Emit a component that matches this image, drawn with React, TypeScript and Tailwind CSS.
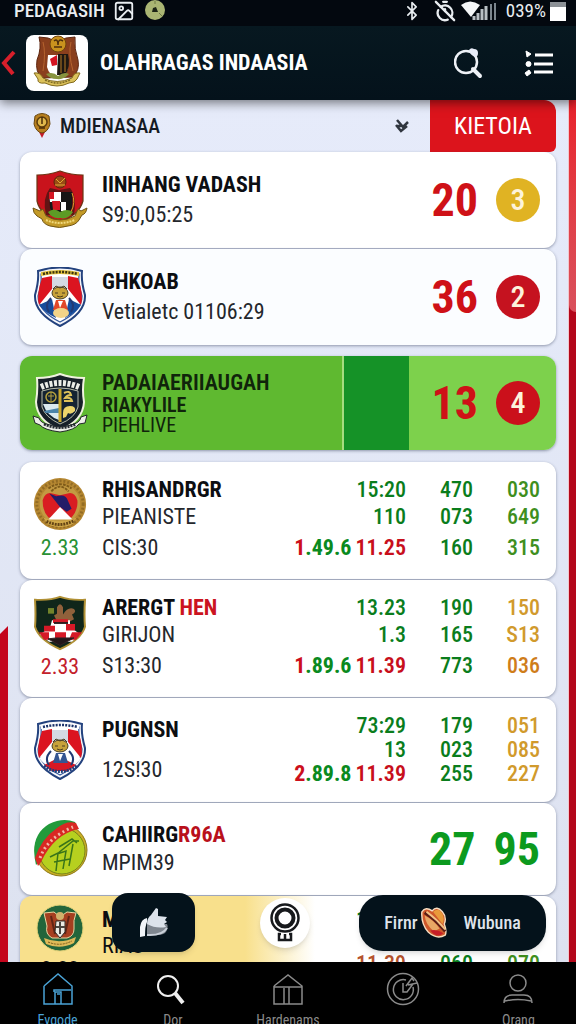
import type { ReactNode } from "react";
import { BluetoothIcon, Image as ImageIcon, TimerOff } from "lucide-react";

type Cell = { text: string; tone: string };

const green = "text-[#0a7d1c]";
const olive = "text-[#3f8f1e]";
const gold = "text-[#d19a2c]";
const amber = "text-[#cf7d1a]";

const rhisandrgr: Cell[][] = [
    [{ text: "15:20", tone: green }, { text: "470", tone: green }, { text: "030", tone: olive }],
    [{ text: "110", tone: green }, { text: "073", tone: green }, { text: "649", tone: olive }],
    [{ text: "1.49.6 11.25", tone: "split" }, { text: "160", tone: green }, { text: "315", tone: olive }],
];

const areract: Cell[][] = [
    [{ text: "13.23", tone: green }, { text: "190", tone: green }, { text: "150", tone: gold }],
    [{ text: "1.3", tone: green }, { text: "165", tone: green }, { text: "S13", tone: gold }],
    [{ text: "1.89.6 11.39", tone: "split" }, { text: "773", tone: green }, { text: "036", tone: amber }],
];

const pugnsn: Cell[][] = [
    [{ text: "73:29", tone: green }, { text: "179", tone: green }, { text: "051", tone: gold }],
    [{ text: "13", tone: green }, { text: "023", tone: green }, { text: "085", tone: gold }],
    [{ text: "2.89.8 11.39", tone: "split" }, { text: "255", tone: green }, { text: "227", tone: gold }],
];

function SplitTime({ text }: { text: string }) {
    const [left, right] = text.split(" ");
    return (
        <span className="font-bold">
            <span className="text-[#cc0f1c]">{left.slice(0, 1)}</span>
            <span className="text-[#0a8a1e]">{left.slice(1)}</span>
            <span className="ml-1 font-semibold text-[#c80f1c]">{right}</span>
        </span>
    );
}

function StatTable({ rows, dense, label }: { rows: Cell[][]; dense?: boolean; label: string }) {
    const heights = dense ? ["h-6", "h-6", "h-6"] : ["h-[26px]", "h-7", "h-[34px]"];
    return (
        <table aria-label={label} className="ml-auto text-right text-[22px] leading-6 font-medium">
            <tbody>
                {rows.map((row, i) => (
                    <tr key={i} className={heights[i]}>
                        {row.map((cell, j) => (
                            <td key={j} className={`p-0 whitespace-nowrap ${j > 0 ? "w-[67px]" : ""} ${cell.tone}`}>
                                {cell.tone === "split" ? <SplitTime text={cell.text} /> : cell.text}
                            </td>
                        ))}
                    </tr>
                ))}
            </tbody>
        </table>
    );
}

function Card({ children, className }: { children: ReactNode; className: string }) {
    return (
        <li className={`flex rounded-xl pr-4 pl-3 shadow-[0_1px_3px_rgba(40,50,80,0.45)] ${className}`}>
            {children}
        </li>
    );
}

function Score({ value, rank, color }: { value: string; rank: string; color: string }) {
    return (
        <div className="ml-auto flex items-center gap-[18px]">
            <span className="text-[46px] leading-none font-bold text-[#cf1117]">{value}</span>
            <span className={`flex size-11 items-center justify-center rounded-full text-[30px] leading-none font-medium text-[#fdf3dc] ${color}`}>
                {rank}
            </span>
        </div>
    );
}

function GarudaArt() {
    return (
        <svg viewBox="0 0 62 56" className="h-full w-full" aria-hidden="true">
            <path d="M13 2 L22 3 Q31 8 40 3 L49 2 Q48 14 52 25 Q54 35 47 42 L16 43 Q9 37 11 25 Q16 13 13 2Z" fill="#8a3f1d" stroke="#5c250f" />
            <path d="M17 7Q20 18 17 36M45 7Q42 18 47 36" stroke="#b5642f" fill="none" />
            <circle cx="32" cy="9" r="8" fill="#c9921e" stroke="#6f430d" />
            <path d="M28 6q4-3 4 4q0-7 5-4M28 12h8" stroke="#4f2f0c" fill="none" strokeWidth="1.5" />
            <path d="M22 20H42V33Q40 41 31 43Q23 40 21 32Z" fill="#fff" />
            <path d="M32 19H42Q45 32 39 40H31Z" fill="#1d1712" />
            <path d="M24 24L31 20V30L26 31Z" fill="#d31321" />
            <path d="M35 20V38M39 20V37" stroke="#b57b24" />
            <path d="M20 39Q27 36 32 41Q38 36 43 39Q38 45 31 44Q24 44 20 39" fill="#87933e" />
            <path d="M8 38Q14 37 17 43Q31 50 46 43Q48 37 54 38L51 44Q49 48 43 48Q31 54 19 48Q11 49 12 44Z" fill="#dcc25b" stroke="#826a1d" />
            <path d="M19 45Q31 51 44 45" stroke="#7e6a25" strokeWidth="1.5" strokeDasharray="2 1" fill="none" />
        </svg>
    );
}

function RedCrest() {
    return (
        <svg viewBox="0 0 56 60" className="h-[60px] w-14" aria-hidden="true">
            <path d="M5 5Q17 5 28 1Q39 5 51 5V31Q47 45 28 52Q8 45 5 31Z" fill="#c9131c" stroke="#6a3513" strokeWidth="1.2" />
            <path d="M14 45Q10 28 18 18L27 20L38 18Q45 26 42 45Z" fill="#621414" />
            <circle cx="28" cy="12" r="6" fill="#9a4b14" stroke="#59290b" />
            <path d="M24 9l4 4 5-5M23 15h10" stroke="#ddac34" fill="none" />
            <path d="M17 22H40V38Q36 46 28 47Q20 44 18 38Z" fill="#161616" />
            <path d="M17 22H29V32H18Z" fill="#fff" />
            <path d="M17 22H22V29H17ZM20 31H28V40H21Z" fill="#d51522" />
            <path d="M29 32H34V41H29Z" fill="#fff" />
            <path d="M40 23Q44 32 39 42" stroke="#da9e29" fill="none" />
            <path d="M16 42Q22 37 28 42Q35 38 41 42Q36 50 28 48Q20 49 16 42Z" fill="#5c9b25" />
            <path d="M1 38L8 41L11 39L14 46Q28 54 43 46L46 39L49 41L55 38Q54 44 50 45L47 50Q44 55 36 56Q28 59 18 56Q11 54 10 49L5 46Q1 43 1 38Z" fill="#c39a27" stroke="#725616" />
            <path d="M14 50Q28 56 43 50" stroke="#f0d87b" strokeWidth="2" strokeDasharray="2 1" fill="none" />
        </svg>
    );
}

function StripedShield({ tall }: { tall?: boolean }) {
    return (
        <svg viewBox="0 0 56 60" className="h-[60px] w-14" aria-hidden="true">
            <path d="M6 4Q28-3 50 4Q49 14 53 28Q54 46 28 59Q2 46 3 28Q7 14 6 4Z" fill="#f6f7fb" stroke="#23427e" strokeWidth="2" />
            <path d="M9 7Q28 2 47 7Q46 17 50 29Q50 44 28 55Q6 44 6 29Q10 17 9 7Z" fill="#fff" stroke="#2f559a" strokeWidth="1.2" />
            <path d="M10 11L20 9V22L7 38Q4 28 10 11ZM46 11L36 9V22L49 38Q52 28 46 11Z" fill="#db1420" />
            <path d="M20 10H36V22H20Z" fill="#d4d9e3" />
            <path d="M9 5Q28 1 47 5V9Q28 5 9 9Z" fill={tall ? "#fff" : "#e2c33f"} />
            <path d="M11 7Q28 3 46 7" stroke={tall ? "#1a326b" : "#3a3311"} strokeWidth="2.5" strokeDasharray="2 1.2" fill="none" />
            <path d="M7 38L20 32L24 51Q13 46 7 38ZM49 38L37 32L33 51Q44 46 49 38Z" fill={tall ? "#fff" : "#164d9c"} />
            {tall && <path d="M12 45L28 37L44 45L36 51H20Z" fill="#d71824" />}
            <path d="M17 45Q12 38 19 31M39 45Q44 38 37 31" stroke="#223a74" strokeWidth="2" fill="none" />
            <ellipse cx="28" cy="26" rx="8" ry="6" fill="#c7a23a" stroke="#4b4024" />
            <path d="M21 22l3-3 4 2 4-2 3 3M23 26h3M30 26h3M25 29q3 2 6 0" stroke="#4a3d20" fill="none" />
            <path d="M24 33H33L36 43H21Z" fill={tall ? "#345692" : "#e14829"} />
            <path d="M26 34L28 41L31 34" fill="#fff" />
            {!tall && <ellipse cx="29" cy="46" rx="8" ry="5" fill="#f2d488" />}
            {tall && <path d="M12 46Q28 57 45 46" stroke="#203e7b" strokeWidth="3" strokeDasharray="2 1" fill="none" />}
        </svg>
    );
}

function BlackShield() {
    return (
        <svg viewBox="0 0 56 60" className="h-[60px] w-14" aria-hidden="true">
            <path d="M5 5Q18 5 28 1Q39 5 52 5Q50 17 52 29Q51 48 28 57Q5 48 4 29Q6 17 5 5Z" fill="#172028" stroke="#f0f2df" strokeWidth="2" />
            <path d="M9 14Q28 6 47 14" stroke="#eceee8" strokeWidth="6" strokeDasharray="3 1.5" fill="none" />
            <path d="M10 18Q28 12 46 18V34Q43 45 28 51Q13 44 10 34Z" fill="#142332" stroke="#b9bdac" />
            <path d="M11 31H27V47Q15 43 11 31Z" fill="#dbe9ef" />
            <path d="M12 38L27 35V40L14 40Z" fill="#4b84aa" />
            <circle cx="19" cy="24" r="5" fill="none" stroke="#b6a13f" strokeWidth="1.5" />
            <path d="M16 23h6M19 19v9" stroke="#b6a13f" />
            <path d="M28 16V49" stroke="#c9a72c" strokeWidth="3" />
            <path d="M32 20q6-3 7 2q-4 0-6 3q6-1 7 3h-8" fill="none" stroke="#dfc25a" strokeWidth="2" />
            <path d="M31 40Q31 33 38 33Q44 33 43 38Q39 42 36 40L34 44L31 45Z" fill="#edd56b" />
            <path d="M1 43L7 45Q8 50 18 52Q28 56 39 52Q48 50 49 44L55 42L53 50L47 51Q43 57 28 59Q12 57 8 52L3 50Z" fill="#eef0e9" stroke="#22282a" />
            <path d="M12 51Q28 58 44 51" stroke="#252b31" strokeWidth="3" strokeDasharray="2 1" fill="none" />
        </svg>
    );
}

function GoldMedal() {
    return (
        <svg viewBox="0 0 56 56" className="h-[54px] w-14" aria-hidden="true">
            <circle cx="28" cy="28" r="27" fill="#b58731" />
            <circle cx="28" cy="28" r="24" fill="none" stroke="#936c24" strokeWidth="3" strokeDasharray="2 2" />
            <circle cx="28" cy="28" r="21" fill="#c39a42" />
            <path d="M16 12Q28 3 40 12M19 15Q28 5 37 15" stroke="#7f5b19" strokeWidth="2" strokeDasharray="3 1" fill="none" />
            <path d="M10 24Q10 36 16 42H40Q47 34 46 24Q43 15 36 17L28 19L20 17Q13 15 10 24Z" fill="#d91d22" />
            <path d="M17 17L24 20Q34 17 36 24L40 33L35 36L28 31Z" fill="#241d68" />
            <path d="M28 31L41 44H16Z" fill="#fff" />
            <path d="M11 42Q28 50 45 42L41 49Q28 55 15 49Z" fill="#d1a949" />
            <path d="M14 46Q28 53 43 45" stroke="#634314" strokeWidth="3" strokeDasharray="2 1" fill="none" />
        </svg>
    );
}

function DarkShield() {
    return (
        <svg viewBox="0 0 56 60" preserveAspectRatio="none" className="h-14 w-14" aria-hidden="true">
            <path d="M3 5Q18 6 28 2Q39 6 53 5Q52 22 53 34Q49 48 28 58Q7 48 3 34Q4 22 3 5Z" fill="#10261a" stroke="#b09035" strokeWidth="2" />
            <path d="M25 20V13q3-6 6 0v8q5-9 11-6q3 3-2 6l2 5-7 4H26l-4-8Z" fill="#90613b" />
            <path d="M16 14h6v6h-6z" fill="#72832b" />
            <path d="M20 27H38V34L48 42L40 50H17L8 42L18 35Z" fill="#fff" />
            <path d="M21 26H36V30H21ZM12 33H23V39H12ZM34 31H43V38H34ZM23 40H34V46H23ZM7 40H17V48H12ZM40 40H50L44 48H37Z" fill="#d51927" />
            <path d="M24 46H42L28 54L16 47Z" stroke="#332126" fill="#221719" />
            <path d="M22 30h14" stroke="#281a1c" strokeWidth="2" />
        </svg>
    );
}

function GreenMedal() {
    return (
        <svg viewBox="0 0 56 60" className="h-[60px] w-14" aria-hidden="true">
            <circle cx="29" cy="31" r="26" fill="#c9ae24" stroke="#8c7818" />
            <circle cx="30" cy="32" r="23" fill="#b6d01f" stroke="#76831a" />
            <path d="M4 46Q-3 17 17 5Q31-2 43 3L45 8Q17 14 6 44Z" fill="#229a3b" />
            <path d="M6 47L3 39Q9 20 25 9Q35 1 44 4L47 10Q22 15 9 43Z" fill="#d92823" />
            <path d="M8 39Q15 19 41 8" stroke="#f1b7a5" strokeWidth="3" strokeDasharray="2 3" fill="none" />
            <path d="M24 52L26 34L18 38M31 50L34 32L25 35L41 22L47 22M27 28L40 20L45 24M37 47L41 25M22 43L38 40" stroke="#397519" strokeWidth="1.5" fill="none" />
        </svg>
    );
}

function RoundGarudaCrest() {
    return (
        <svg viewBox="0 0 48 48" className="mx-1 size-12" aria-hidden="true">
            <circle cx="24" cy="24" r="23" fill="#23653b" stroke="#e3d37a" />
            <path d="M8 9L18 8L24 13L31 8L40 9Q37 16 38 25Q38 32 31 34H16Q9 30 11 22Z" fill="#a63f20" stroke="#ead7a2" />
            <path d="M15 12L19 30M33 12L29 30" stroke="#612415" strokeWidth="2" />
            <circle cx="24" cy="12" r="4" fill="#d0b16b" />
            <path d="M20 17H29V28L24 34L19 28Z" fill="#eceae3" stroke="#312a24" />
            <path d="M24 18V30M20 23H29" stroke="#4a4540" strokeWidth="2" />
            <path d="M8 34Q24 41 40 33L38 39Q24 46 10 40Z" fill="#dfba58" />
            <path d="M12 38Q24 43 36 37" stroke="#775818" strokeDasharray="2 1" fill="none" />
        </svg>
    );
}

function StatusBar() {
    return (
        <div className="flex h-[26px] items-start bg-[#03080f] pr-[10px] pl-[14px] text-[#e9edf1]">
            <span className="text-[19px] leading-[22px] font-medium">PEDAGASIH</span>
            <ImageIcon className="ml-2 size-[22px]" strokeWidth={2} />
            <svg viewBox="0 0 20 20" className="ml-2.5 size-5" aria-hidden="true">
                <circle cx="10" cy="10" r="10" fill="#aab573" />
                <path d="M7 12L8 8L11 7L13 12Z" fill="#1d2416" />
                <path d="M10 1V4M14 13L17 16" stroke="#6f7a45" />
            </svg>
            <div className="ml-auto flex items-center gap-1">
                <BluetoothIcon className="size-5" strokeWidth={2} />
                <TimerOff className="ml-2 size-[22px]" strokeWidth={2.5} />
                <svg viewBox="0 0 42 20" className="h-5 w-[42px]" aria-hidden="true">
                    <path d="M1 4Q10-3 20 4L11 16Z" fill="#f4f6f8" />
                    <path d="M14 19V15M18 19V12M22 19V8M26 19V5" stroke="#b9bfc4" strokeWidth="3" />
                    <path d="M31 19V3M35 19V2" stroke="#7c858d" strokeWidth="2" />
                </svg>
                <span className="text-[19px] leading-[22px]">039%</span>
                <svg viewBox="0 0 16 20" className="h-5 w-4" aria-hidden="true">
                    <path d="M0 1H16V7H0Z" fill="#8c9196" />
                    <path d="M0 6H16V20H0Z" fill="#fff" />
                </svg>
            </div>
        </div>
    );
}

function Header() {
    return (
        <header className="flex h-[74px] items-center bg-gradient-to-b from-[#071820] to-[#04121b] pr-[22px]">
            <button aria-label="Back" className="flex w-[26px]">
                <svg viewBox="0 0 18 28" className="h-7 w-[18px]" aria-hidden="true">
                    <path d="M14 3L4 14L13 25" fill="none" stroke="#d71f2b" strokeWidth="4" />
                </svg>
            </button>
            <div className="h-14 w-[62px] overflow-hidden rounded-lg bg-white">
                <GarudaArt />
            </div>
            <h1 className="ml-3 text-[22px] leading-8 font-bold whitespace-nowrap text-white">OLAHRAGAS INDAASIA</h1>
            <button aria-label="Search" className="ml-auto">
                <svg viewBox="0 0 32 32" className="size-8" aria-hidden="true">
                    <circle cx="12" cy="15" r="11" fill="none" stroke="#eef1f6" strokeWidth="2.5" />
                    <path d="M19 22L26 29" stroke="#eef1f6" strokeWidth="4" strokeLinecap="round" />
                    <path d="M15 3Q17 0 20 2Q24 2 24 6Q24 10 21 10Q16 8 15 3Z" fill="#e8edf8" />
                </svg>
            </button>
            <button aria-label="Menu" className="ml-9">
                <svg viewBox="0 0 32 28" className="h-7 w-8" aria-hidden="true">
                    <path d="M13 6H31M12 15H31M12 23H31" stroke="#fff" strokeWidth="3" />
                    <path d="M4 2L9 5L5 8ZM3 24L7 21L9 24L5 27ZM4 15a2.500 2.500 0 1 1 5 0a2.500 2.500 0 1 1-5 0" fill="#fff" stroke="#fff" />
                </svg>
            </button>
        </header>
    );
}

function FilterRow() {
    return (
        <div className="flex h-[52px] items-stretch">
            <label htmlFor="region" className="flex items-center pl-3">
                <svg viewBox="0 0 20 28" role="img" aria-label="Region" className="h-7 w-5">
                    <path d="M6 18H14L10 26Z" fill="#c51c28" />
                    <path d="M3 4Q10-1 17 4L18 12Q16 20 10 21Q4 20 2 12Z" fill="#b8801f" stroke="#6a4810" />
                    <circle cx="10" cy="10" r="5" fill="#e0b84b" stroke="#5b3b0c" strokeWidth="1.5" />
                    <path d="M10 5V12M7 16H13" stroke="#4a2d08" strokeWidth="1.5" />
                </svg>
            </label>
            <div className="relative flex flex-1 items-center">
                <select id="region" className="w-full appearance-none bg-transparent pl-2 text-[20px] leading-7 font-medium text-[#151a22]">
                    <option>MDIENASAA</option>
                </select>
                <svg viewBox="0 0 16 14" className="pointer-events-none absolute right-5 h-3.5 w-4" aria-hidden="true">
                    <path d="M3 1L9 8L14 3M2 6L7 12L13 7M3 7H12" fill="none" stroke="#30363f" strokeWidth="2.5" />
                </svg>
            </div>
            <button className="w-[126px] rounded-tr-xl rounded-br-md bg-[#dc141c] text-[24px] leading-7 text-white">KIETOIA</button>
        </div>
    );
}

function FloatingBar() {
    return (
        <div className="absolute inset-x-0 bottom-[10px] flex items-center pr-[30px] pl-28">
            <button aria-label="Like" className="flex h-[59px] w-[83px] items-center justify-center rounded-2xl bg-[#04121b] shadow-md">
                <svg viewBox="0 0 30 32" className="h-8 w-[30px]" aria-hidden="true">
                    <path d="M8 17H28Q30 21 26 26Q22 29 8 28Z" fill="#7f868f" />
                    <path d="M1 30V20Q2 12 8 11V15Q6 19 6 29Z" fill="#f1f4f8" />
                    <path d="M8 17Q8 11 12 8L17 1L19 2V9L28 10L26 13L28 15L25 17L27 20Q17 22 8 17Z" fill="#dce2ea" />
                    <path d="M8 28Q23 29 28 21" fill="none" stroke="#c9cfd8" strokeWidth="2" />
                </svg>
            </button>
            <button aria-label="Awards" className="ml-[65px] flex size-[50px] items-center justify-center rounded-full bg-white shadow-md">
                <svg viewBox="0 0 36 40" className="h-10 w-9" aria-hidden="true">
                    <circle cx="18" cy="15" r="13.500" fill="#fff" stroke="#17191c" strokeWidth="2.500" />
                    <circle cx="18" cy="15" r="8.500" fill="#fff" stroke="#17191c" strokeWidth="4" />
                    <path d="M14 31H12V37H24V31H22M18 31V37" fill="none" stroke="#17191c" strokeWidth="2.500" />
                </svg>
            </button>
            <button className="ml-auto flex h-14 w-[187px] items-center justify-center rounded-[24px] bg-[#04121b] text-[18px] leading-6 font-medium text-[#dfe3ea] shadow-md">
                Firnr
                <svg viewBox="0 0 30 34" className="ml-0.5 h-8 w-7" aria-hidden="true">
                    <path d="M2 5Q6-1 13 4Q18-2 24 5Q29 11 26 18Q29 26 27 30Q18 35 9 27Q1 18 2 5Z" fill="#cf582b" stroke="#f7ddc1" strokeWidth="1.5" />
                    <path d="M14 5Q20 0 24 7Q27 13 24 18Z" fill="#e99a3b" />
                    <path d="M5 6Q16 13 27 26" stroke="#5c1d16" strokeWidth="3" fill="none" />
                    <path d="M7 5Q18 13 27 24" stroke="#f2c487" strokeWidth="2" fill="none" />
                    <path d="M5 9Q15 14 21 23L15 26Q6 19 5 9Z" fill="#e8a765" />
                    <path d="M11 25Q18 23 25 28Q18 34 11 25Z" fill="#c71e28" />
                </svg>
                <span className="ml-4">Wubuna</span>
            </button>
        </div>
    );
}

const navItems = [
    {
        label: "Evgode",
        tone: "text-[#4aa3d6]",
        icon: <path d="M3 14L17 2L31 14V32H3V14M13 20V18H30M14 32V20H20V32M16 22H19" />,
    },
    {
        label: "Dor",
        tone: "text-[#8b8b8b]",
        icon: (
            <g stroke="#efefef">
                <circle cx="12" cy="14" r="10" strokeWidth="2" />
                <path d="M19 21L27 31" strokeWidth="4" />
            </g>
        ),
    },
    {
        label: "Hardenams",
        tone: "text-[#8b8b8b]",
        icon: <path d="M3 14L17 3L31 14V32H3V14M3 15H31M13 16V32M18 15V32" />,
    },
    {
        label: "",
        tone: "text-[#8b8b8b]",
        icon: (
            <g>
                <circle cx="17" cy="17" r="15.500" />
                <path d="M20 8A10 10 0 1 0 27 15M17 11V20H21L27 12M20 14L26 6L28 9M22 13L31 11" />
            </g>
        ),
    },
    {
        label: "Orang",
        tone: "text-[#8b8b8b]",
        icon: (
            <g>
                <circle cx="17" cy="11" r="8" />
                <path d="M3 31Q3 23 11 23H23Q31 23 31 31M4 29Q17 26 30 29" />
            </g>
        ),
    },
];

function BottomNav() {
    return (
        <nav className="h-[62px] shrink-0 overflow-hidden bg-black">
            <ul className="flex">
                {navItems.map((item, i) => (
                    <li key={i} className="flex-1">
                        <a href="#" aria-label={item.label || "Activity"} className={`flex flex-col items-center pt-2.5 ${item.tone}`}>
                            <svg viewBox="0 0 34 34" className="h-[34px] w-[34px]" fill="none" stroke="currentColor" strokeWidth="1.5" aria-hidden="true">
                                {item.icon}
                            </svg>
                            <span className="mt-1 text-[14px] leading-5">{item.label}</span>
                        </a>
                    </li>
                ))}
            </ul>
        </nav>
    );
}

export default function App() {
    return (
        <div className="flex h-screen flex-col overflow-hidden bg-black font-['Roboto_Condensed','Liberation_Sans_Narrow',Roboto,sans-serif] text-[#0c0e12]">
            <div className="relative z-10 shrink-0 shadow-[0_3px_10px_rgba(0,0,0,0.5)]">
                <StatusBar />
                <Header />
            </div>

            <main className="relative flex min-h-0 flex-1 overflow-hidden bg-gradient-to-b from-[#e6ebfa] to-[#dde2f0]">
                {/* Left ribbon */}
                <div className="flex w-2 flex-col justify-end">
                    <div className="h-[336px] bg-[#c4051c] [clip-path:polygon(0_8px,100%_0,100%_100%,0_100%)]" />
                </div>

                <div className="min-w-0 flex-1 px-3">
                    <FilterRow />
                    <ul className="flex flex-col gap-px">
                        <Card className="items-center bg-white pt-[18px] pb-[18px]">
                            <RedCrest />
                            <div className="ml-3.5 text-[22px] leading-[30px]">
                                <h2 className="font-bold">IINHANG VADASH</h2>
                                <p className="text-[#24272c]">S9:0,05:25</p>
                            </div>
                            <Score value="20" rank="3" color="bg-[#e0b323]" />
                        </Card>
                        <Card className="items-center bg-[#fbfdff] py-[18px]">
                            <StripedShield />
                            <div className="ml-3.5 text-[22px] leading-[30px]">
                                <h2 className="font-bold">GHKOAB</h2>
                                <p className="text-[#24272c]">Vetialetc 01106:29</p>
                            </div>
                            <Score value="36" rank="2" color="bg-[#c5121f]" />
                        </Card>

                        {/* Highlighted team */}
                        <Card className="mt-2.5 mb-[11px] items-center bg-[linear-gradient(90deg,#5fb930_0_60%,#a5dd80_60%_60.4%,#159227_60.4%_72.6%,#7dd14c_72.6%)] py-[15px]">
                            <BlackShield />
                            <div className="ml-3.5 text-[#10240b]">
                                <h2 className="text-[22px] leading-6 font-semibold">PADAIAERIIAUGAH</h2>
                                <p className="text-[20px] leading-5 font-semibold">RIAKYLILE</p>
                                <p className="text-[20px] leading-5">PIEHLIVE</p>
                            </div>
                            <Score value="13" rank="4" color="bg-[#cb101b]" />
                        </Card>

                        <Card className="bg-white pt-[15px] pb-3.5">
                            <div className="flex flex-col items-center">
                                <GoldMedal />
                                <span className="text-[22px] leading-[34px] text-[#2a9134]">2.33</span>
                            </div>
                            <div className="ml-3.5 text-[22px]">
                                <h2 className="leading-[26px] font-bold">RHISANDRGR</h2>
                                <p className="leading-7 text-[#24272c]">PIEANISTE</p>
                                <p className="leading-[34px] text-[#24272c]">CIS:30</p>
                            </div>
                            <StatTable rows={rhisandrgr} label="Rhisandrgr results" />
                        </Card>
                        <Card className="bg-white pt-[15px] pb-3.5">
                            <div className="flex flex-col items-center">
                                <DarkShield />
                                <span className="text-[22px] leading-8 text-[#c3202a]">2.33</span>
                            </div>
                            <div className="ml-3.5 text-[22px]">
                                <h2 className="leading-[26px] font-bold">
                                    ARERGT <span className="text-[#cb1420]">HEN</span>
                                </h2>
                                <p className="leading-7 text-[#24272c]">GIRIJON</p>
                                <p className="leading-[34px] text-[#24272c]">S13:30</p>
                            </div>
                            <StatTable rows={areract} label="Arergt Hen results" />
                        </Card>
                        <Card className="items-center bg-white py-4">
                            <StripedShield tall />
                            <div className="ml-3.5 flex flex-col gap-3 text-[22px] leading-7">
                                <h2 className="font-bold">PUGNSN</h2>
                                <p className="text-[#24272c]">12S!30</p>
                            </div>
                            <StatTable rows={pugnsn} dense label="Pugnsn results" />
                        </Card>
                        <Card className="items-center bg-white py-4">
                            <GreenMedal />
                            <div className="ml-3.5 text-[22px] leading-7">
                                <h2 className="font-bold">
                                    CAHIIRG<span className="text-[#b9101b]">R96A</span>
                                </h2>
                                <p className="text-[#24272c]">MPIM39</p>
                            </div>
                            <div className="ml-auto flex gap-[18px] text-[46px] leading-none font-bold text-[#0c9a1e]">
                                <span>27</span>
                                <span>95</span>
                            </div>
                        </Card>
                        <Card className="bg-[linear-gradient(90deg,#f8e08c_0_42%,#fff_55%)] pt-2">
                            <div className="flex flex-col items-center">
                                <RoundGarudaCrest />
                                <span className="text-[22px] leading-9">2.33</span>
                            </div>
                            <div className="ml-3.5 text-[22px]">
                                <h2 className="leading-8 font-bold">MEDANG</h2>
                                <p className="leading-5">RIAU</p>
                                <p className="leading-8">Sist 30</p>
                            </div>
                            <table aria-label="Medang results" className="ml-auto self-start text-right text-[22px] leading-6 font-medium">
                                <tbody>
                                    <tr className="h-8">
                                        <td className={green}>13.20</td>
                                        <td className={`w-[67px] ${green}`}>170</td>
                                        <td className={`w-[67px] ${olive}`}>050</td>
                                    </tr>
                                    <tr className="h-14">
                                        <td className="text-[#b5522c]">11.39</td>
                                        <td className={green}>060</td>
                                        <td className={olive}>070</td>
                                    </tr>
                                </tbody>
                            </table>
                        </Card>
                    </ul>
                </div>

                {/* Right ribbon */}
                <div className="w-2 border-l border-[#f2c6cc] bg-[#b3061a]">
                    <div className="h-[212px] rounded-bl-lg bg-gradient-to-b from-[#e8202a] to-[#d9505c]" />
                </div>

                <FloatingBar />
            </main>

            <BottomNav />
        </div>
    );
}
